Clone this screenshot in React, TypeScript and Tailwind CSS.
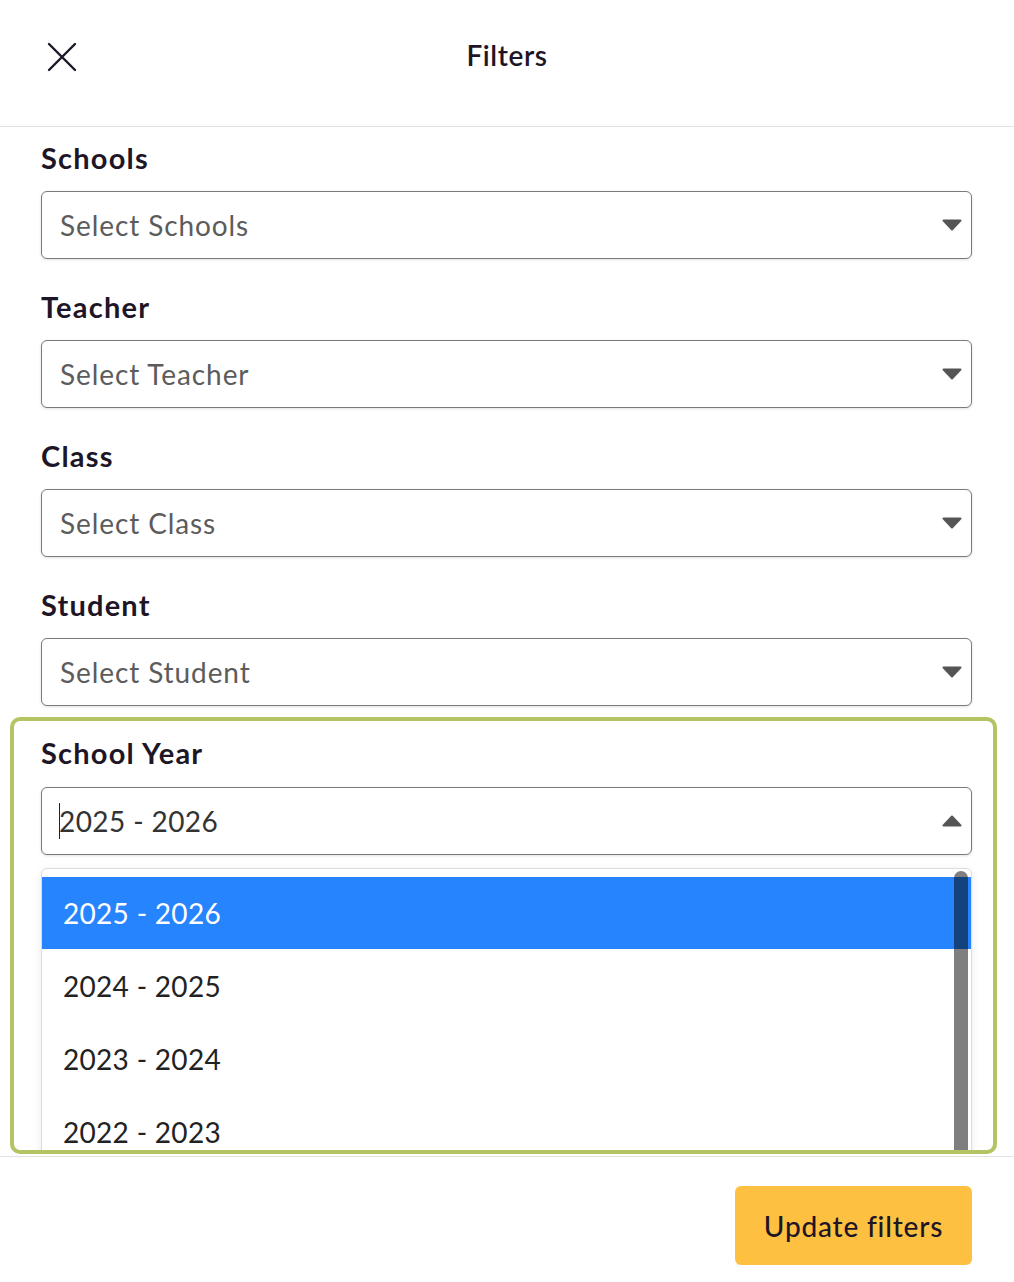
import React from "react"

const font = { fontFamily: 'Lato, "Noto Sans", Arial, sans-serif' }

const Caret = ({ up = false }: { up?: boolean }) => (
  <svg width="20" height="12" viewBox="0 0 20 12" className="shrink-0">
    {up ? (
      <path d="M10 1.5 L18.5 10.5 H1.5 Z" fill="#555" stroke="#555" strokeWidth="2" strokeLinejoin="round" />
    ) : (
      <path d="M1.5 1.5 H18.5 L10 10.5 Z" fill="#555" stroke="#555" strokeWidth="2" strokeLinejoin="round" />
    )}
  </svg>
)

const Field = ({ label, placeholder }: { label: string; placeholder: string }) => (
  <div className="flex flex-col">
    <div className="h-[34px] leading-[34px] text-[29px] tracking-[1.2px] font-bold text-[#1e1626]">{label}</div>
    <div className="mt-4 h-[68px] flex items-center justify-between pl-[18px] pr-[9px] border border-[#7a7a7a] rounded-[6px] bg-white shadow-[0_1px_3px_rgba(0,0,0,0.12)]">
      <span className="text-[28px] tracking-[0.9px] text-[#5c5c5c]">{placeholder}</span>
      <Caret />
    </div>
  </div>
)

const years = ["2025 - 2026", "2024 - 2025", "2023 - 2024", "2022 - 2023", "2021 - 2022"]

export default function App() {
  return (
    <div className="w-[1014px] h-[1282px] bg-white flex flex-col overflow-hidden" style={font}>
      {/* Header */}
      <div className="h-[127px] shrink-0 border-b border-[#e2e2e2] relative flex items-center justify-center">
        <button className="absolute left-[46px] top-[41px] w-[32px] h-[32px]">
          <svg width="32" height="32" viewBox="0 0 32 32">
            <path d="M3 3 L29 29 M29 3 L3 29" stroke="#1e1626" strokeWidth="2.4" strokeLinecap="round" />
          </svg>
        </button>
        <div className="text-[28px] tracking-[0.6px] font-semibold text-[#1e1626] -mt-[16px]">Filters</div>
      </div>

      {/* Body */}
      <div className="flex-1 overflow-hidden flex flex-col pt-[14px]">
        <div className="flex flex-col gap-[31px] pl-[41px] pr-[42px]">
          <Field label="Schools" placeholder="Select Schools" />
          <Field label="Teacher" placeholder="Select Teacher" />
          <Field label="Class" placeholder="Select Class" />
          <Field label="Student" placeholder="Select Student" />
        </div>

        <div className="mt-[11px] ml-[10px] mr-[17px] h-[437px] border-4 border-[#b2c562] rounded-[10px] overflow-hidden pt-[15px] pl-[27px] pr-[21px]">
          <div className="h-[34px] leading-[34px] text-[29px] tracking-[1.2px] font-bold text-[#1e1626]">School Year</div>
          <div className="mt-[17px] h-[68px] flex items-center justify-between pl-[17px] pr-[9px] border border-[#7a7a7a] rounded-[6px] bg-white shadow-[0_1px_3px_rgba(0,0,0,0.12)]">
            <div className="flex items-center">
              <span className="w-px h-[36px] bg-[#222]" />
              <span className="text-[28px] tracking-[0.4px] text-[#333] -ml-px">2025 - 2026</span>
            </div>
            <Caret up />
          </div>

          <div className="relative mt-[13px] border border-[#dcdcdc] rounded-[6px] pt-[8px] bg-white shadow-[0_2px_8px_rgba(0,0,0,0.08)]">
            {years.map((y, i) => (
              <div
                key={y}
                className={
                  i === 0
                    ? "h-[72px] flex items-center pl-[21px] text-[28px] tracking-[0.3px] bg-[#2684ff] text-white"
                    : "h-[73px] flex items-center pl-[21px] text-[28px] tracking-[0.3px] text-[#222]"
                }
              >
                {y}
              </div>
            ))}
            <div className="absolute right-[3px] top-[2px] w-[14px] h-[400px] rounded-t-full bg-[rgba(0,0,0,0.5)]" />
          </div>
        </div>
      </div>

      {/* Footer */}
      <div className="h-[126px] shrink-0 border-t border-[#e2e2e2] flex justify-end items-start pt-[29px] pr-[42px]">
        <button className="w-[237px] h-[79px] rounded-[6px] bg-[#fdc040] text-[28px] tracking-[0.8px] text-[#1e1626] font-medium">
          Update filters
        </button>
      </div>
    </div>
  )
}
